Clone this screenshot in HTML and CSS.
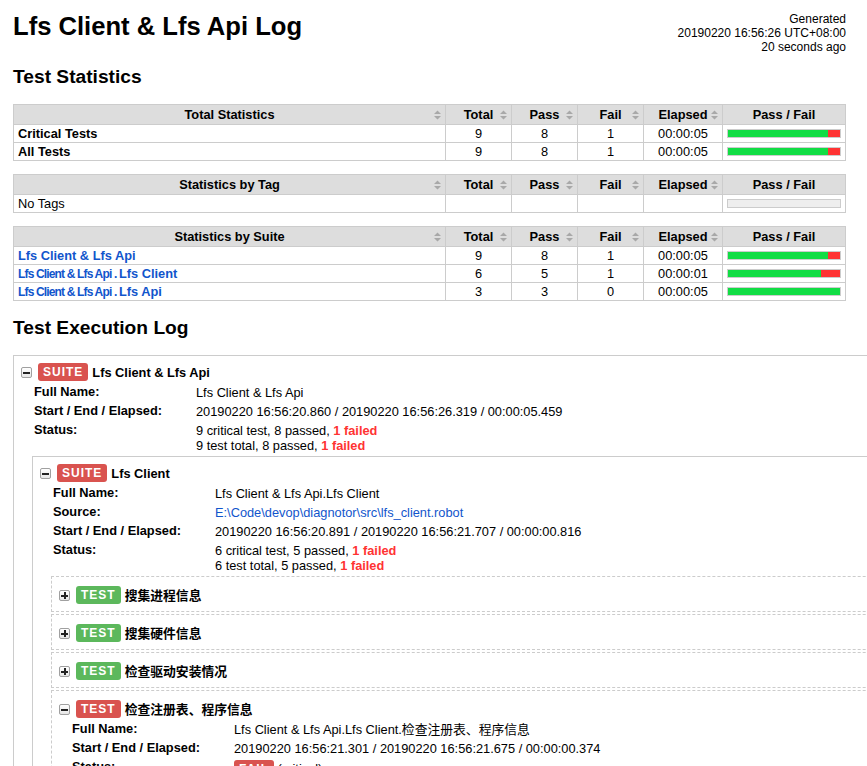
FILE: index.html
```html
<!DOCTYPE html>
<html lang="en">
<head>
<meta charset="utf-8">
<title>Lfs Client &amp; Lfs Api Log</title>
<link rel="stylesheet" href="styles.css">
</head>
<body>
<div class="header">
  <h1>Lfs Client &amp; Lfs Api Log</h1>
  <div class="generated">Generated<br>20190220 16:56:26 UTC+08:00<br>20 seconds ago</div>
</div>

<h2 class="h-stats">Test Statistics</h2>

<table class="statistics">
  <colgroup><col><col class="c-stat"><col class="c-stat"><col class="c-stat"><col class="c-elapsed"><col class="c-graph"></colgroup>
  <thead>
    <tr>
      <th><div class="th-in"><span></span><span>Total Statistics</span><svg class="sort" width="7" height="10" viewBox="0 0 7 10"><path d="M3.5 0.5L7 4H0Z M0 6H7L3.5 9.5Z"/></svg></div></th>
      <th><div class="th-in"><span></span><span>Total</span><svg class="sort" width="7" height="10" viewBox="0 0 7 10"><path d="M3.5 0.5L7 4H0Z M0 6H7L3.5 9.5Z"/></svg></div></th>
      <th><div class="th-in"><span></span><span>Pass</span><svg class="sort" width="7" height="10" viewBox="0 0 7 10"><path d="M3.5 0.5L7 4H0Z M0 6H7L3.5 9.5Z"/></svg></div></th>
      <th><div class="th-in"><span></span><span>Fail</span><svg class="sort" width="7" height="10" viewBox="0 0 7 10"><path d="M3.5 0.5L7 4H0Z M0 6H7L3.5 9.5Z"/></svg></div></th>
      <th><div class="th-in"><span></span><span>Elapsed</span><svg class="sort" width="7" height="10" viewBox="0 0 7 10"><path d="M3.5 0.5L7 4H0Z M0 6H7L3.5 9.5Z"/></svg></div></th>
      <th>Pass / Fail</th>
    </tr>
  </thead>
  <tbody>
    <tr>
      <td class="stat-name"><span>Critical Tests</span></td>
      <td class="num">9</td><td class="num">8</td><td class="num">1</td><td class="num">00:00:05</td>
      <td><div class="graph"><div class="pass-bar" style="width:88.89%"></div><div class="fail-bar" style="width:11.11%"></div></div></td>
    </tr>
    <tr>
      <td class="stat-name"><span>All Tests</span></td>
      <td class="num">9</td><td class="num">8</td><td class="num">1</td><td class="num">00:00:05</td>
      <td><div class="graph"><div class="pass-bar" style="width:88.89%"></div><div class="fail-bar" style="width:11.11%"></div></div></td>
    </tr>
  </tbody>
</table>

<table class="statistics">
  <colgroup><col><col class="c-stat"><col class="c-stat"><col class="c-stat"><col class="c-elapsed"><col class="c-graph"></colgroup>
  <thead>
    <tr>
      <th><div class="th-in"><span></span><span>Statistics by Tag</span><svg class="sort" width="7" height="10" viewBox="0 0 7 10"><path d="M3.5 0.5L7 4H0Z M0 6H7L3.5 9.5Z"/></svg></div></th>
      <th><div class="th-in"><span></span><span>Total</span><svg class="sort" width="7" height="10" viewBox="0 0 7 10"><path d="M3.5 0.5L7 4H0Z M0 6H7L3.5 9.5Z"/></svg></div></th>
      <th><div class="th-in"><span></span><span>Pass</span><svg class="sort" width="7" height="10" viewBox="0 0 7 10"><path d="M3.5 0.5L7 4H0Z M0 6H7L3.5 9.5Z"/></svg></div></th>
      <th><div class="th-in"><span></span><span>Fail</span><svg class="sort" width="7" height="10" viewBox="0 0 7 10"><path d="M3.5 0.5L7 4H0Z M0 6H7L3.5 9.5Z"/></svg></div></th>
      <th><div class="th-in"><span></span><span>Elapsed</span><svg class="sort" width="7" height="10" viewBox="0 0 7 10"><path d="M3.5 0.5L7 4H0Z M0 6H7L3.5 9.5Z"/></svg></div></th>
      <th>Pass / Fail</th>
    </tr>
  </thead>
  <tbody>
    <tr>
      <td class="plain">No Tags</td>
      <td></td><td></td><td></td><td></td>
      <td><div class="graph empty"></div></td>
    </tr>
  </tbody>
</table>

<table class="statistics">
  <colgroup><col><col class="c-stat"><col class="c-stat"><col class="c-stat"><col class="c-elapsed"><col class="c-graph"></colgroup>
  <thead>
    <tr>
      <th><div class="th-in"><span></span><span>Statistics by Suite</span><svg class="sort" width="7" height="10" viewBox="0 0 7 10"><path d="M3.5 0.5L7 4H0Z M0 6H7L3.5 9.5Z"/></svg></div></th>
      <th><div class="th-in"><span></span><span>Total</span><svg class="sort" width="7" height="10" viewBox="0 0 7 10"><path d="M3.5 0.5L7 4H0Z M0 6H7L3.5 9.5Z"/></svg></div></th>
      <th><div class="th-in"><span></span><span>Pass</span><svg class="sort" width="7" height="10" viewBox="0 0 7 10"><path d="M3.5 0.5L7 4H0Z M0 6H7L3.5 9.5Z"/></svg></div></th>
      <th><div class="th-in"><span></span><span>Fail</span><svg class="sort" width="7" height="10" viewBox="0 0 7 10"><path d="M3.5 0.5L7 4H0Z M0 6H7L3.5 9.5Z"/></svg></div></th>
      <th><div class="th-in"><span></span><span>Elapsed</span><svg class="sort" width="7" height="10" viewBox="0 0 7 10"><path d="M3.5 0.5L7 4H0Z M0 6H7L3.5 9.5Z"/></svg></div></th>
      <th>Pass / Fail</th>
    </tr>
  </thead>
  <tbody>
    <tr>
      <td class="stat-name"><a href="#s1">Lfs Client &amp; Lfs Api</a></td>
      <td class="num">9</td><td class="num">8</td><td class="num">1</td><td class="num">00:00:05</td>
      <td><div class="graph"><div class="pass-bar" style="width:88.89%"></div><div class="fail-bar" style="width:11.11%"></div></div></td>
    </tr>
    <tr>
      <td class="stat-name"><a href="#s1-s1"><span class="parent-name">Lfs Client &amp; Lfs Api . </span>Lfs Client</a></td>
      <td class="num">6</td><td class="num">5</td><td class="num">1</td><td class="num">00:00:01</td>
      <td><div class="graph"><div class="pass-bar" style="width:83.33%"></div><div class="fail-bar" style="width:16.67%"></div></div></td>
    </tr>
    <tr>
      <td class="stat-name"><a href="#s1-s2"><span class="parent-name">Lfs Client &amp; Lfs Api . </span>Lfs Api</a></td>
      <td class="num">3</td><td class="num">3</td><td class="num">0</td><td class="num">00:00:05</td>
      <td><div class="graph"><div class="pass-bar" style="width:100%"></div></div></td>
    </tr>
  </tbody>
</table>

<h2 class="h-exec">Test Execution Log</h2>

<div class="log">
  <div class="element suite" id="s1">
    <div class="element-header">
      <span class="toggle"><svg width="9" height="9" viewBox="0 0 9 9"><rect x="1" y="3.5" width="7" height="2"/></svg></span>
      <span class="label fail">SUITE</span>
      <span class="name">Lfs Client &amp; Lfs Api</span>
    </div>
    <table class="metadata">
      <tr><th>Full Name:</th><td>Lfs Client &amp; Lfs Api</td></tr>
      <tr><th>Start / End / Elapsed:</th><td>20190220 16:56:20.860 / 20190220 16:56:26.319 / 00:00:05.459</td></tr>
      <tr><th>Status:</th><td>9 critical test, 8 passed, <span class="fail">1 failed</span><br>9 test total, 8 passed, <span class="fail">1 failed</span></td></tr>
    </table>
    <div class="children">
      <div class="element suite" id="s1-s1">
        <div class="element-header">
          <span class="toggle"><svg width="9" height="9" viewBox="0 0 9 9"><rect x="1" y="3.5" width="7" height="2"/></svg></span>
          <span class="label fail">SUITE</span>
          <span class="name">Lfs Client</span>
        </div>
        <table class="metadata">
          <tr><th>Full Name:</th><td>Lfs Client &amp; Lfs Api.Lfs Client</td></tr>
          <tr><th>Source:</th><td><a href="#src">E:\Code\devop\diagnotor\src\lfs_client.robot</a></td></tr>
          <tr><th>Start / End / Elapsed:</th><td>20190220 16:56:20.891 / 20190220 16:56:21.707 / 00:00:00.816</td></tr>
          <tr><th>Status:</th><td>6 critical test, 5 passed, <span class="fail">1 failed</span><br>6 test total, 5 passed, <span class="fail">1 failed</span></td></tr>
        </table>
        <div class="children">
          <div class="element test collapsed">
            <div class="element-header">
              <span class="toggle"><svg width="9" height="9" viewBox="0 0 9 9"><rect x="1" y="3.5" width="7" height="2"/><rect x="3.5" y="1" width="2" height="7"/></svg></span>
              <span class="label pass">TEST</span>
              <span class="name cjk">搜集进程信息</span>
            </div>
          </div>
          <div class="element test collapsed">
            <div class="element-header">
              <span class="toggle"><svg width="9" height="9" viewBox="0 0 9 9"><rect x="1" y="3.5" width="7" height="2"/><rect x="3.5" y="1" width="2" height="7"/></svg></span>
              <span class="label pass">TEST</span>
              <span class="name cjk">搜集硬件信息</span>
            </div>
          </div>
          <div class="element test collapsed">
            <div class="element-header">
              <span class="toggle"><svg width="9" height="9" viewBox="0 0 9 9"><rect x="1" y="3.5" width="7" height="2"/><rect x="3.5" y="1" width="2" height="7"/></svg></span>
              <span class="label pass">TEST</span>
              <span class="name cjk">检查驱动安装情况</span>
            </div>
          </div>
          <div class="element test">
            <div class="element-header">
              <span class="toggle"><svg width="9" height="9" viewBox="0 0 9 9"><rect x="1" y="3.5" width="7" height="2"/></svg></span>
              <span class="label fail">TEST</span>
              <span class="name cjk">检查注册表、程序信息</span>
            </div>
            <table class="metadata">
              <tr><th>Full Name:</th><td class="cjk-val">Lfs Client &amp; Lfs Api.Lfs Client.检查注册表、程序信息</td></tr>
              <tr><th>Start / End / Elapsed:</th><td>20190220 16:56:21.301 / 20190220 16:56:21.675 / 00:00:00.374</td></tr>
              <tr><th>Status:</th><td><span class="label fail">FAIL</span> (critical)</td></tr>
              <tr><th>Message:</th><td>&nbsp;</td></tr>
            </table>
          </div>
        </div>
      </div>
    </div>
  </div>
</div>
</body>
</html>
```

FILE: styles.css
```css
html {
  overflow-x: hidden;
}

body {
  margin: 0;
  padding: 11px 0 0 13px;
  font-family: "Liberation Sans", Arial, Helvetica, sans-serif;
  font-size: 12.8px;
  color: #000;
  background: #fff;
}

a {
  color: #15c;
  text-decoration: none;
}

/* Header */
.header {
  display: flex;
  justify-content: space-between;
  align-items: flex-start;
  width: 833px;
}

h1 {
  margin: 0;
  font-size: 25.6px;
  line-height: 30px;
  font-weight: bold;
}

.generated {
  margin-top: 1px;
  font-size: 12px;
  line-height: 14px;
  text-align: right;
  white-space: nowrap;
}

h2 {
  font-size: 19.2px;
  line-height: 22px;
  font-weight: bold;
  margin: 0;
}

.h-stats {
  margin: 12px 0 16px;
}

.h-exec {
  margin: 16px 0 16px;
}

/* Statistics tables */
.statistics {
  width: 833px;
  table-layout: fixed;
  border-collapse: collapse;
  margin-bottom: 13px;
  font-size: 12.8px;
}

.c-stat { width: 66px; }
.c-elapsed { width: 79px; }
.c-graph { width: 123px; }

.statistics th,
.statistics td {
  border: 1px solid #ccc;
  line-height: 15px;
  vertical-align: middle;
}

.statistics th {
  background: #ddd;
  padding: 2px 4px;
  font-weight: bold;
  text-align: center;
}

.statistics td {
  padding: 1px 4px;
}

.th-in {
  display: grid;
  grid-template-columns: 1fr auto 1fr;
  align-items: center;
}

.sort {
  justify-self: end;
  display: block;
  fill: #a8a8a8;
}

.num {
  text-align: center;
}

.stat-name {
  font-weight: bold;
  text-align: left;
}

.plain {
  text-align: left;
}

.parent-name {
  font-size: 12px;
  line-height: 1;
  letter-spacing: -0.07em;
}

.graph {
  display: flex;
  height: 7px;
  border: 1px solid #ccc;
  background: #f33;
}

.graph.empty {
  background: #eee;
}

.pass-bar {
  height: 100%;
  background: #1d4;
}

.fail-bar {
  height: 100%;
  background: #f33;
}

/* Execution log */
.log {
  width: 1000px;
}

.element {
  border: 1px solid #ccc;
}

.element.test {
  border-style: dashed;
}

.element-header {
  display: flex;
  align-items: center;
  padding: 7px 0 1px 7px;
}

.element.test .element-header {
  padding-top: 9px;
}

.element.test.collapsed .element-header {
  padding-bottom: 7px;
}

.toggle {
  box-sizing: border-box;
  width: 11px;
  height: 11px;
  border: 1px solid #a0a0a0;
  border-radius: 2px;
  background: linear-gradient(#ffffff, #e6e6e6);
  display: flex;
  margin-right: 6px;
}

.toggle svg {
  display: block;
  fill: #222;
  shape-rendering: crispEdges;
}

.label {
  display: inline-block;
  padding: 2px 5px;
  font-size: 12px;
  line-height: 14px;
  font-weight: bold;
  letter-spacing: 1px;
  color: #fff;
  border-radius: 3px;
  white-space: nowrap;
}

.label.pass {
  background: #5cb85c;
}

.name {
  margin-left: 4px;
  font-weight: bold;
  line-height: 15px;
}

.cjk,
.cjk-val {
  font-family: "Liberation Sans", "Noto Sans CJK SC", sans-serif;
}

.metadata {
  border-collapse: collapse;
  margin-left: 20px;
  font-size: 12.8px;
}

.metadata th {
  width: 162px;
  text-align: left;
  vertical-align: top;
  font-weight: bold;
  padding: 2px 0;
  line-height: 15px;
}

.metadata td {
  vertical-align: top;
  padding: 3px 0 1px;
  line-height: 15px;
  white-space: nowrap;
}

.fail {
  color: #f33;
  font-weight: bold;
}

.label.fail {
  color: #fff;
  background: #d9534f;
}

.children {
  display: flex;
  flex-direction: column;
  gap: 2px;
  margin: 2px 0 0 18px;
}
```
